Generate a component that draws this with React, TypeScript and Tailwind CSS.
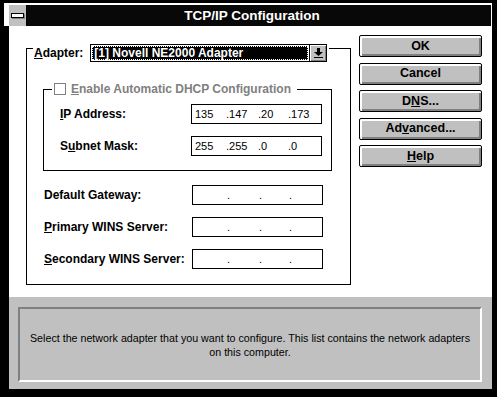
import React from "react";

const font = { fontFamily: '"Liberation Sans", Arial, sans-serif' };

function U({ children }: { children: React.ReactNode }) {
  return <span className="underline underline-offset-[1px] decoration-[1px]">{children}</span>;
}

function Btn({ children }: { children: React.ReactNode }) {
  return (
    <div className="h-[22px] w-[123px] rounded-[2px] border border-black bg-[#c0c0c0] shadow-[inset_1px_1px_0_#fff,inset_2px_2px_0_#fff,inset_-1px_-1px_0_#808080,inset_-2px_-2px_0_#808080] flex items-center justify-center text-[12.5px] font-bold text-black leading-none">
      {children}
    </div>
  );
}

function IpBox({ parts }: { parts: string[] }) {
  return (
    <div className="h-[20px] w-[131px] border border-black bg-white flex items-center text-[11px] text-black leading-none">
      <span className="w-[34px] pl-[3px]">{parts[0]}</span>
      <span className="w-[32px]">.{parts[1]}</span>
      <span className="w-[30px]">.{parts[2]}</span>
      <span className="w-[30px]">.{parts[3]}</span>
    </div>
  );
}

function Row({ label, labelW, parts }: { label: React.ReactNode; labelW: string; parts: string[] }) {
  return (
    <div className="flex items-center">
      <div className={`${labelW} text-[12px] font-bold text-black leading-none`}>{label}</div>
      <IpBox parts={parts} />
    </div>
  );
}

export default function App() {
  return (
    <div className="w-[499px] h-[398px] bg-white" style={font}>
      <div className="w-[497px] h-[397px] bg-black flex flex-col pt-[3px] pl-[4px] pr-[5px] pb-[8px]">
        {/* title area */}
        <div className="bg-white pt-[2px] pl-[5px] pr-[1px]">
          <div className="h-[21px] bg-[#080808] flex items-center">
            <div className="w-[18px] h-[21px] bg-[#c0c0c0] border-r border-black flex items-center justify-center">
              <div className="w-[13px] h-[5px] bg-white border border-black shadow-[1px_1px_0_#808080]" />
            </div>
            <div className="flex-1 text-center text-white font-bold text-[13.5px] leading-none pr-[14px]">
              TCP/IP Configuration
            </div>
          </div>
        </div>
        {/* content */}
        <div className="flex-1 ml-[5px] flex flex-col">
          <div className="h-[271px] bg-white flex items-start pl-[17px]">
            {/* adapter group box */}
            <div className="mt-[22px] w-[325px] h-[237px] border border-black relative">
              <div className="absolute left-[6px] top-[-5px] flex items-center bg-white">
                <span className="px-[1px] text-[12px] font-bold text-black leading-none">
                  <U>A</U>dapter:
                </span>
                <div className="ml-[6px] w-[237px] h-[18px] border border-black bg-white flex">
                  <div className="flex-1 m-[1px] bg-black outline-dotted outline-1 outline-white -outline-offset-1 flex items-center pl-[2px]">
                    <span className="text-white font-bold text-[12px] leading-none">[1] Novell NE2000 Adapter</span>
                  </div>
                  <div className="w-[17px] h-full border-l border-black bg-[#c0c0c0] shadow-[inset_1px_1px_0_#fff,inset_-1px_-1px_0_#808080] flex items-center justify-center">
                    <svg width="9" height="10" viewBox="0 0 9 10">
                      <rect x="3" y="0" width="3" height="4" fill="#000" />
                      <polygon points="0,4 9,4 4.5,8" fill="#000" />
                      <rect x="0" y="9" width="9" height="1" fill="#000" />
                    </svg>
                  </div>
                </div>
                <div className="w-[2px]" />
              </div>

              {/* DHCP inner box */}
              <div className="ml-[16px] mt-[40px] w-[289px] h-[82px] border border-black relative flex flex-col pt-[14px] gap-[12px]">
                <div className="absolute left-[8px] top-[-7px] bg-white flex items-center pr-[6px] pl-[2px]">
                  <div className="w-[12px] h-[12px] border border-[#808080] bg-white" />
                  <span className="ml-[5px] text-[12px] font-bold text-[#808080] leading-none">
                    <U>E</U>nable Automatic DHCP Configuration
                  </span>
                </div>
                <div className="pl-[16px]">
                  <Row label={<><U>I</U>P Address:</>} labelW="w-[131px]" parts={["135", "147", "20", "173"]} />
                </div>
                <div className="pl-[16px]">
                  <Row label={<>S<U>u</U>bnet Mask:</>} labelW="w-[131px]" parts={["255", "255", "0", "0"]} />
                </div>
              </div>

              <div className="flex flex-col gap-[12px] mt-[14px] pl-[17px]">
                <Row label="Default Gateway:" labelW="w-[148px]" parts={["", "", "", ""]} />
                <Row label={<><U>P</U>rimary WINS Server:</>} labelW="w-[148px]" parts={["", "", "", ""]} />
                <Row label={<><U>S</U>econdary WINS Server:</>} labelW="w-[148px]" parts={["", "", "", ""]} />
              </div>
            </div>

            {/* buttons */}
            <div className="ml-[8px] mt-[9px] flex flex-col gap-[5.5px]">
              <Btn>OK</Btn>
              <Btn>Cancel</Btn>
              <Btn>D<U>N</U>S...</Btn>
              <Btn>Ad<U>v</U>anced...</Btn>
              <Btn><U>H</U>elp</Btn>
            </div>
          </div>
          {/* status area */}
          <div className="flex-1 bg-[#c0c0c0] pt-[10px] pl-[9px] pr-[10px] pb-[7px] flex">
            <div className="flex-1 border-t-2 border-l-2 border-t-[#808080] border-l-[#808080] border-b-2 border-r-2 border-b-white border-r-white flex flex-col items-center justify-center text-[10.7px] text-black leading-[14px] text-center px-[6px]">
              <div>Select the network adapter that you want to configure. This list contains the network adapters</div>
              <div>on this computer.</div>
            </div>
          </div>
        </div>
      </div>
    </div>
  );
}
